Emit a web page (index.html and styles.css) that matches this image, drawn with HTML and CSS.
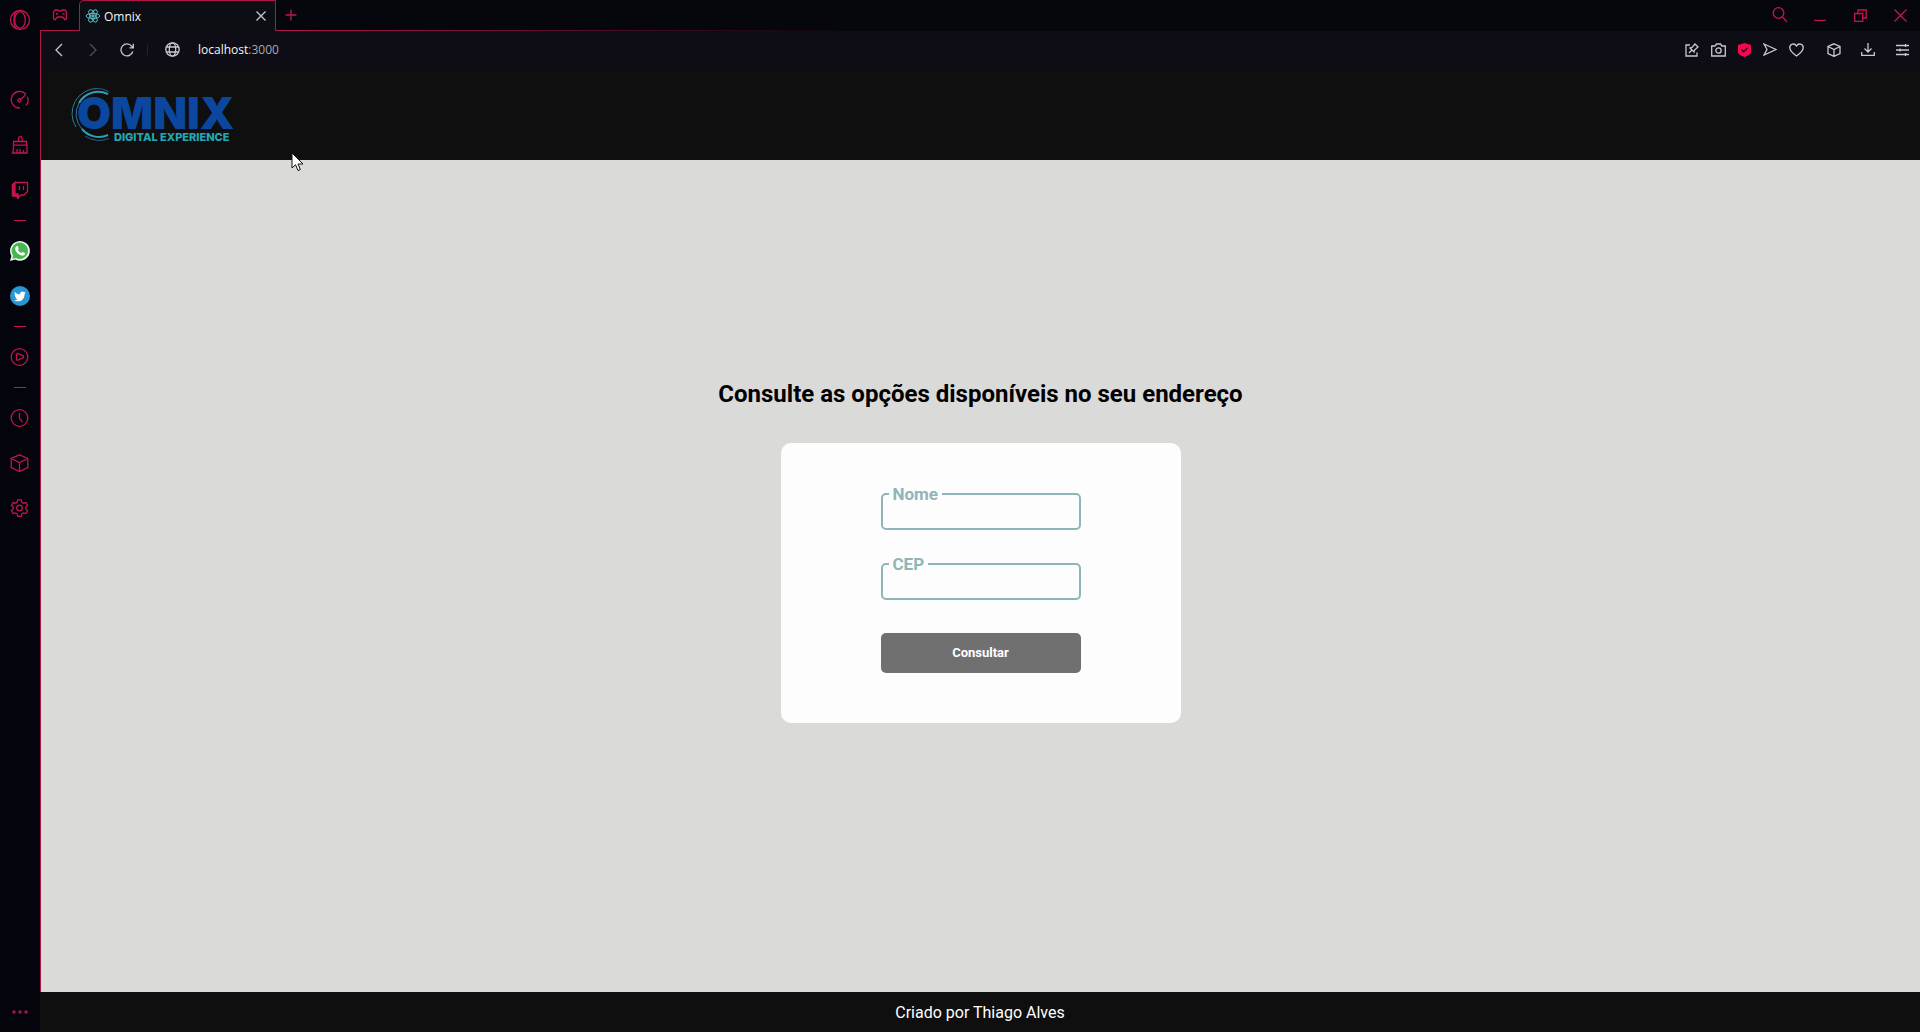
FILE: index.html
```html
<!DOCTYPE html>
<html lang="pt-BR">
<head>
<meta charset="utf-8">
<meta name="viewport" content="width=device-width, initial-scale=1">
<title>Omnix</title>
<link rel="stylesheet" href="styles.css">
</head>
<body>
<div class="browser">
  <nav class="sidebar" aria-label="Barra lateral">
    <button class="side-btn side-btn--menu" aria-label="Menu"><svg class="icon" width="22" height="22" viewBox="0 0 22 22"><circle cx="11" cy="11" r="9.5"/><ellipse cx="11" cy="11" rx="5.3" ry="8.3"/><path d="M8 2C4 4 4 18 8 20"/></svg></button>
    <button class="side-btn" aria-label="GX Control"><svg class="icon" width="20" height="20" viewBox="0 0 20 20"><path d="M10 18A8.3 8.3 0 1 1 16 4.5M17.4 7A8 8 0 0 1 16 15.5M10.5 9.5l5-4.500"/><circle cx="9.500" cy="10.500" r="1.500"/></svg></button>
    <button class="side-btn" aria-label="GX Cleaner"><svg class="icon" width="20" height="20" viewBox="0 0 20 20"><path d="M8.500 6V3.500a1.800 1.800 0 0 1 3.600 0V6M3.500 10V6.500h13V10M3.500 10.200h13.500V18H2.500c1-2 1-5 1-7.800zM6.500 18l1-4M10 18v-4M13.500 18v-3"/></svg></button>
    <button class="side-btn" aria-label="Twitch"><svg class="icon" width="20" height="20" viewBox="0 0 20 20"><path class="fill" d="M2.500 5L5 2.500V14h3v4l-2-2H2.500z"/><path d="M5 2.500h12.500v9L14 15h-3l-3 3v-3H2.500V5zM9.500 6v4M13.500 6v4"/></svg></button>
    <hr class="side-line">
    <button class="side-btn" aria-label="WhatsApp"><svg width="20" height="20" viewBox="0 0 20 20"><path fill="#f2f5f2" d="M0 20l1.400-5.100A9.900 9.900 0 1 1 5.200 18.600z"/><path fill="#46b84d" d="M2.300 17.700l.9-3.100A8.200 8.200 0 1 1 6 17z"/><path fill="#fff" d="M6.500 5.200c.5-.4 1.100-.4 1.400.2l.8 1.900c.1.500-.8 1.200-.8 1.500.7 1.500 1.800 2.600 3.400 3.200.4 0 1-1.200 1.500-1l2 1c.5.300.1 1.500-.4 2-2.500 2.300-9.900-2.500-9.200-6.800.1-.8.700-1.500 1.300-2z"/></svg></button>
    <button class="side-btn" aria-label="Twitter"><svg width="20" height="20" viewBox="0 0 20 20"><circle cx="10" cy="10" r="10" fill="#2895d4"/><path fill="#fff" d="M15.800 6.500l-1.200.4.900-1.200-1.500.6a2.500 2.500 0 0 0-4.200 2.200A7 7 0 0 1 4.800 6a2.500 2.500 0 0 0 .8 3.300l-1.100-.3c0 1.200.8 2.200 2 2.400l-1.100.1c.3 1 1.200 1.600 2.300 1.700A5 5 0 0 1 4 14.300c4.500 2.600 10.600.3 10.600-6.400z"/></svg></button>
    <hr class="side-line">
    <button class="side-btn" aria-label="Player"><svg class="icon" width="20" height="20" viewBox="0 0 20 20"><circle cx="9.500" cy="10" r="8.300"/><path d="M6.500 7l1-.5 6 2.500v1.500l-6 2.800-1-.5z"/></svg></button>
    <hr class="side-line">
    <button class="side-btn" aria-label="Histórico"><svg class="icon" width="20" height="20" viewBox="0 0 20 20"><circle cx="9.500" cy="10" r="8.300"/><path d="M9.500 5v5.500l3 3.500"/></svg></button>
    <button class="side-btn" aria-label="Extensões"><svg class="icon" width="20" height="20" viewBox="0 0 20 20"><path d="M9.500 1.800L17.800 5.500V14.500L9.500 18.500 1.200 14.500V5.500zM1.200 5.500L9.500 9.500l8.300-4M9.500 9.500v9"/></svg></button>
    <button class="side-btn" aria-label="Configurações"><svg class="icon" width="20" height="20" viewBox="0 0 20 20"><path d="M7.800 1.800h3.400l.7 2.500 1.500.9 2.500-.7 1.700 3-1.800 1.700v1.700l1.800 1.700-1.700 3-2.500-.7-1.500.9-.7 2.500H7.800l-.7-2.500-1.500-.9-2.500.7-1.700-3 1.800-1.700V9.200L1.400 7.500l1.700-3 2.500.7 1.500-.9z"/><circle cx="9.500" cy="10" r="2.800"/></svg></button>
    <button class="side-btn side-btn--more" aria-label="Mais"><svg width="16" height="4" viewBox="0 0 16 4" fill="#b01645"><circle cx="2" cy="2" r="1.700"/><circle cx="8" cy="2" r="1.700"/><circle cx="14" cy="2" r="1.700"/></svg></button>
  </nav>

  <div class="window">
    <div class="tabbar">
      <button class="corner-btn" aria-label="GX Corner"><svg class="icon" width="16" height="14" viewBox="0 0 16 14"><path d="M3 2h3l1 1h2l1-1h3l1.500 2v6.500l-1.500 1.300L10.500 9h-5L3 11.800 1.500 10.500V4zM4 6h2M10.500 6h2"/></svg></button>
      <div class="tab">
        <svg width="16" height="16" viewBox="0 0 16 16" fill="none" stroke="#5bb8bd"><circle cx="8" cy="8" r="1.200" fill="#5bb8bd"/><ellipse cx="8" cy="8" rx="6.800" ry="2.600"/><ellipse cx="8" cy="8" rx="6.800" ry="2.600" transform="rotate(60 8 8)"/><ellipse cx="8" cy="8" rx="6.800" ry="2.600" transform="rotate(120 8 8)"/></svg>
        <span class="tab-title">Omnix</span>
        <button class="tab-close" aria-label="Fechar aba"><svg class="icon icon--light" width="10" height="10" viewBox="0 0 10 10"><path d="M.5.5l9 9M9.500.5l-9 9"/></svg></button>
      </div>
      <div class="tab-rest">
        <button class="new-tab" aria-label="Nova aba"><svg class="icon" width="12" height="12" viewBox="0 0 12 12"><path d="M6 .5v11M.5 6h11"/></svg></button>
        <div class="window-controls">
          <button aria-label="Pesquisar"><svg class="icon" width="16" height="18" viewBox="0 0 16 18"><circle cx="6.500" cy="7" r="5.300"/><path d="M10.500 11l4.500 5"/></svg></button>
          <button aria-label="Minimizar"><svg class="icon" width="12" height="12" viewBox="0 0 12 12"><path d="M0 11.500h12"/></svg></button>
          <button aria-label="Restaurar"><svg class="icon" width="13" height="13" viewBox="0 0 13 13"><path d="M.7 4.500h8v8h-8zM4 4V1h8.300v8H9"/></svg></button>
          <button aria-label="Fechar"><svg class="icon" width="13" height="13" viewBox="0 0 13 13"><path d="M.5.5l12 12M12.500.5l-12 12"/></svg></button>
        </div>
      </div>
    </div>

    <div class="toolbar">
      <button class="nav-btn" aria-label="Voltar"><svg class="icon icon--light" width="8" height="14" viewBox="0 0 8 14"><path d="M7 1L1 7l6 6"/></svg></button>
      <button class="nav-btn nav-btn--off" aria-label="Avançar" disabled><svg class="icon icon--light" width="8" height="14" viewBox="0 0 8 14"><path d="M1 1l6 6-6 6"/></svg></button>
      <button class="nav-btn" aria-label="Recarregar"><svg class="icon icon--light" width="14" height="14" viewBox="0 0 14 14"><path d="M12.800 8.500A6 6 0 1 1 11.700 3.200L13 4.800M13.300.8v4H9.500"/></svg></button>
      <span class="divider"></span>
      <svg class="icon icon--light globe" width="15" height="15" viewBox="0 0 15 15"><circle cx="7.500" cy="7.500" r="6.700"/><ellipse cx="7.500" cy="7.500" rx="3.200" ry="6.700"/><path d="M1.500 5h12M1.500 10h12"/></svg>
      <p class="address">localhost<span class="port">:3000</span></p>
      <div class="tools">
        <button aria-label="Fixar"><svg class="icon icon--light" width="14" height="14" viewBox="0 0 14 14"><path d="M5 2H1v11h11V9.500M4 10l3-3M5 5l4 4 .5-2L13 4 10 1 7 4.500z"/></svg></button>
        <button aria-label="Captura"><svg class="icon icon--light" width="15" height="14" viewBox="0 0 15 14"><path d="M.7 3H4l1.500-2h4L11 3h3.300v10H.7z"/><circle cx="7.500" cy="7.500" r="2.700"/></svg></button>
        <button aria-label="Bloqueador"><svg width="13" height="14" viewBox="0 0 13 14"><path fill="#f5084f" d="M6.500 0L13 2v7c0 2-3 4-6.500 5C3 13 0 11 0 9V2z"/><path fill="none" stroke="#300a18" stroke-width="1.500" d="M3.500 6.500l2.200 2.200L9.500 5"/></svg></button>
        <button aria-label="Enviar"><svg class="icon icon--light" width="14" height="13" viewBox="0 0 14 13"><path d="M1 1l12 5.500L1 12l3-5.500z"/></svg></button>
        <button aria-label="Favoritos"><svg class="icon icon--light" width="15" height="14" viewBox="0 0 15 14"><path d="M7.500 13C4 10.500.8 7.500.8 4.500.8 1 5.500-.5 7.500 3 9.500-.5 14.200 1 14.200 4.500c0 3-3.200 6-6.700 8.500z"/></svg></button>
        <button class="wide spaced" aria-label="Extensões"><svg class="icon icon--light" width="14" height="14" viewBox="0 0 14 14"><path d="M7 .8L13 3.500V10.500L7 13.400 1 10.500V3.500zM1 3.500l6 3 6-3M7 6.500v7"/></svg></button>
        <button class="wide" aria-label="Downloads"><svg class="icon icon--light" width="14" height="13" viewBox="0 0 14 13"><path d="M7 0v9M3.500 5.500L7 9l3.500-3.500M.7 9v3.300h12.600V9"/></svg></button>
        <button class="wide" aria-label="Ajustes"><svg class="icon icon--light" width="13" height="12" viewBox="0 0 13 12"><path d="M0 1.500h13M0 6h13M0 10.500h13M9.500 0v3M4 4.500v3M9.500 9v3"/></svg></button>
      </div>
    </div>

    <header class="site-header">
      <a href="#" class="logo" aria-label="Omnix Digital Experience">
        <svg width="168" height="60" viewBox="0 0 168 60">
          <g fill="none">
            <path stroke="#2c9fb4" stroke-width="2" d="M38 9A22 22 0 0 0 9 18M38 50A22 22 0 0 1 12 44"/>
            <path stroke="#2c7f8e" d="M9 18A22 22 0 0 0 12 44M27 3.500A25 25 0 0 0 6 42"/>
            <path stroke="#27608c" d="M39 6.500A25 25 0 0 0 26 3.500M39 53.500A26 26 0 0 1 15 51"/>
          </g>
          <text class="logo-name" x="7" y="44">OMNIX</text>
          <text class="logo-tag" x="44" y="56">DIGITAL EXPERIENCE</text>
        </svg>
      </a>
    </header>

    <main class="content">
      <h1 class="title">Consulte as opções disponíveis no seu endereço</h1>
      <form class="card">
        <fieldset class="field">
          <legend><label for="nome">Nome</label></legend>
          <input id="nome" type="text">
        </fieldset>
        <fieldset class="field">
          <legend><label for="cep">CEP</label></legend>
          <input id="cep" type="text">
        </fieldset>
        <button class="submit" type="button">Consultar</button>
      </form>
    </main>

    <footer class="site-footer">Criado por Thiago Alves</footer>
  </div>
</div>
<svg class="cursor" width="13" height="20" viewBox="0 0 13 20"><path fill="#fff" stroke="#111" d="M1 1v15l3.500-3.300L7 18.500l2.400-1-2.400-5.500h5z"/></svg>
</body>
</html>
```
FILE: styles.css
```css
* {
  box-sizing: border-box;
}

body {
  margin: 0;
  font-family: Roboto, sans-serif;
  background: #05050d;
}

button {
  display: flex;
  align-items: center;
  justify-content: center;
  padding: 0;
  border: 0;
  background: none;
  font-family: inherit;
  cursor: pointer;
}

.icon {
  fill: none;
  stroke: #c3164b;
  stroke-width: 1.3;
}

.icon .fill {
  fill: #c3164b;
}

.icon--light {
  stroke: #c9c8cf;
}

.browser {
  display: flex;
  min-height: 100vh;
}

/* Sidebar */
.sidebar {
  display: flex;
  flex-direction: column;
  width: 40px;
  flex-shrink: 0;
  background: #04040c;
}

.side-btn {
  width: 40px;
  height: 45px;
}

.side-btn--menu {
  height: 40px;
  margin-bottom: 37px;
}

.side-btn--more {
  height: 40px;
  margin-top: auto;
}

.side-line {
  width: 12px;
  height: 1px;
  margin: 8px auto 7px;
  border: 0;
  background: #c3164b;
}

.window {
  display: flex;
  flex-direction: column;
  flex: 1;
  min-width: 0;
}

/* Tabs */
.tabbar {
  display: flex;
  height: 31px;
  background: #06060d;
}

.corner-btn {
  width: 39px;
  border-bottom: 1px solid #b01645;
}

.tab {
  display: flex;
  align-items: center;
  width: 197px;
  padding: 0 9px 0 5px;
  border: 1px solid #b01645;
  border-bottom: 0;
  border-top-left-radius: 5px;
  background: #0d0d14;
}

.tab-title {
  flex: 1;
  margin-left: 3px;
  color: #f4f4f6;
  font: 12px "Open Sans", sans-serif;
}

.tab-rest {
  display: flex;
  flex: 1;
  justify-content: space-between;
  border-bottom: 1px solid;
  border-image: linear-gradient(90deg, #b01645, transparent 35%) 1;
}

.new-tab {
  width: 30px;
}

.window-controls {
  display: flex;
}

.window-controls button {
  width: 40px;
}

/* Address bar */
.toolbar {
  display: flex;
  align-items: center;
  height: 39px;
  padding: 0 1px 2px;
  border-left: 1px solid #b01645;
  background: #0e0d15;
}

.nav-btn {
  width: 34px;
  height: 34px;
}

.nav-btn--off {
  opacity: 0.35;
}

.divider {
  width: 1px;
  height: 10px;
  margin: 0 17px 0 3px;
  background: #24232c;
}

.address {
  flex: 1;
  margin: 0 0 0 18px;
  color: #f4f4f6;
  font: 12px "Open Sans", sans-serif;
}

.port {
  color: #a9a8b4;
}

.tools {
  display: flex;
}

.tools button {
  width: 26px;
  height: 30px;
}

.tools .wide {
  width: 34px;
}

.tools .spaced {
  margin-left: 8px;
}

/* Page */
.site-header {
  display: flex;
  align-items: center;
  height: 90px;
  padding-left: 29px;
  border-left: 1px solid #b01645;
  background: #0f0f0f;
}

.logo svg {
  display: block;
}

.logo-name {
  fill: #0b479f;
  font: 900 44px Inter, sans-serif;
}

.logo-tag {
  fill: #22a9b5;
  font: 800 11px Inter, sans-serif;
}

.content {
  display: flex;
  flex: 1;
  flex-direction: column;
  align-items: center;
  justify-content: center;
  gap: 35px;
  padding: 0 0 50px;
  border-left: 1px solid #b01645;
  background: #dadad9;
}

.title {
  margin: 0;
  color: #000;
  font-size: 24px;
  font-weight: 700;
  line-height: 28px;
}

.card {
  display: flex;
  flex-direction: column;
  gap: 25px;
  width: 400px;
  max-width: 100%;
  padding: 42px 100px 50px;
  border-radius: 10px;
  background: #fdfdfd;
}

.field {
  min-width: 0;
  margin: 0;
  padding: 0 6px;
  border: 2px solid #8fb5b8;
  border-radius: 5px;
}

.field legend {
  padding: 0 4px;
  color: #8fb5b8;
  font-size: 17px;
  font-weight: 700;
  line-height: 18px;
}

.field input {
  display: block;
  width: 100%;
  height: 25px;
  padding: 0;
  border: 0;
  outline: 0;
  background: none;
  font: 16px Roboto, sans-serif;
}

.submit {
  height: 40px;
  margin-top: 8px;
  border-radius: 5px;
  background: #707070;
  color: #fff;
  font-size: 13px;
  font-weight: 700;
}

.site-footer {
  height: 40px;
  padding-top: 1px;
  background: #0f0f0f;
  color: #fff;
  font-size: 16px;
  line-height: 39px;
  text-align: center;
}

.cursor {
  position: absolute;
  left: 291px;
  top: 152px;
}
```
